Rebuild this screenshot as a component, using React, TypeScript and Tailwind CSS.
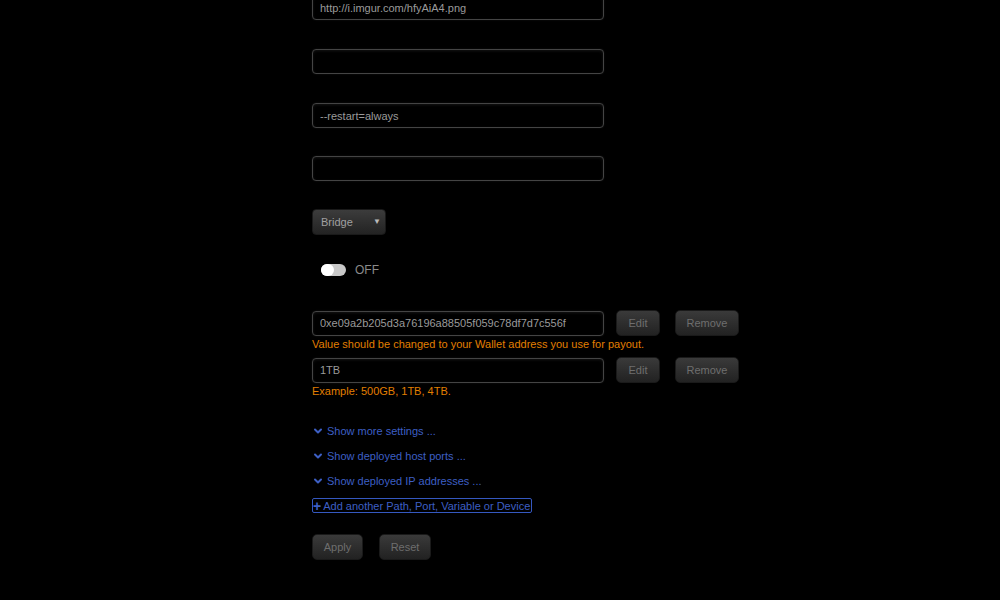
import React, { useState } from 'react'
import { ChevronDown } from 'lucide-react'

const font = "font-['Liberation_Sans',Arial,sans-serif]"

const TextField = ({ value, className = '' }: { value?: string; className?: string }) => (
  <input
    readOnly
    defaultValue={value}
    className={`h-[25px] w-[292px] rounded-[4px] border border-[#444] bg-black px-[7px] text-[11px] text-[#9a9a9a] shadow-[inset_0_1px_3px_rgba(255,255,255,0.08),0_0_2px_rgba(255,255,255,0.08)] outline-none ${className}`}
  />
)

const DarkButton = ({ label, className = '' }: { label: string; className?: string }) => (
  <button
    className={`h-[26px] rounded-[5px] border border-[#1a1a1a] bg-gradient-to-b from-[#3a3a3a] to-[#222] text-[11px] text-[#6e6e6e] shadow-[0_1px_2px_rgba(0,0,0,0.6)] ${className}`}
  >
    {label}
  </button>
)

const ShowLink = ({ label, className = '' }: { label: string; className?: string }) => (
  <a className={`flex h-[14px] items-center gap-[3px] text-[11px] leading-[14px] text-[#3d5fc4] cursor-pointer ${className}`}>
    <ChevronDown size={12} strokeWidth={4} className="text-[#3d5fc4]" />
    {label}
  </a>
)

export default function App() {
  const [on, setOn] = useState(false)

  return (
    <div className={`h-[600px] w-[1000px] overflow-hidden bg-black ${font}`}>
      <div className="flex flex-col items-start pl-[312px]">
        <TextField value="http://i.imgur.com/hfyAiA4.png" className="-mt-[5px]" />
        <TextField className="mt-[29px]" />
        <TextField value="--restart=always" className="mt-[29px]" />
        <TextField className="mt-[28px]" />

        {/* network mode */}
        <div className="relative mt-[28px] flex h-[26px] w-[74px] items-center rounded-[4px] border border-[#1a1a1a] bg-gradient-to-b from-[#3c3c3c] to-[#232323] pl-[8px] text-[11px] text-[#a0a0a0] shadow-[0_1px_2px_rgba(0,0,0,0.6)]">
          Bridge
          <span className="absolute right-[4px] top-[6px] text-[8px] text-[#bbb]">▼</span>
        </div>

        {/* privileged switch */}
        <div className="mt-[28px] flex h-[14px] items-center pl-[9px]">
          <button
            onClick={() => setOn(!on)}
            className="relative h-[12px] w-[25px] rounded-full bg-[#c8c8c8]"
          >
            <span className="absolute left-0 top-0 h-[12px] w-[13px] rounded-full bg-white" />
          </button>
          <span className="ml-[9px] text-[12px] text-[#8a8a8a]">{on ? 'ON' : 'OFF'}</span>
        </div>

        <div className="mt-[33px] flex h-[26px] items-center">
          <TextField value="0xe09a2b205d3a76196a88505f059c78df7d7c556f" />
          <DarkButton label="Edit" className="ml-[12px] w-[44px]" />
          <DarkButton label="Remove" className="ml-[15px] w-[64px]" />
        </div>
        <p className="mt-[1px] text-[11px] leading-[14px] text-[#e27f00]">
          Value should be changed to your Wallet address you use for payout.
        </p>

        <div className="mt-[6px] flex h-[26px] items-center">
          <TextField value="1TB" />
          <DarkButton label="Edit" className="ml-[12px] w-[44px]" />
          <DarkButton label="Remove" className="ml-[15px] w-[64px]" />
        </div>
        <p className="mt-[1px] text-[11px] leading-[14px] text-[#e27f00]">Example: 500GB, 1TB, 4TB.</p>

        <ShowLink label="Show more settings ..." className="mt-[26px]" />
        <ShowLink label="Show deployed host ports ..." className="mt-[11px]" />
        <ShowLink label="Show deployed IP addresses ..." className="mt-[11px]" />

        <a className="mt-[10px] flex h-[15px] items-center gap-[2px] rounded-[2px] border border-[#3558c0] pr-[1px] text-[11px] leading-[14px] text-[#3d5fc4] cursor-pointer">
          <span className="text-[14px] font-bold leading-[12px]">+</span>
          Add another Path, Port, Variable or Device
        </a>

        <div className="mt-[21px] flex gap-[16px]">
          <DarkButton label="Apply" className="w-[51px]" />
          <DarkButton label="Reset" className="w-[52px]" />
        </div>
      </div>
    </div>
  )
}
